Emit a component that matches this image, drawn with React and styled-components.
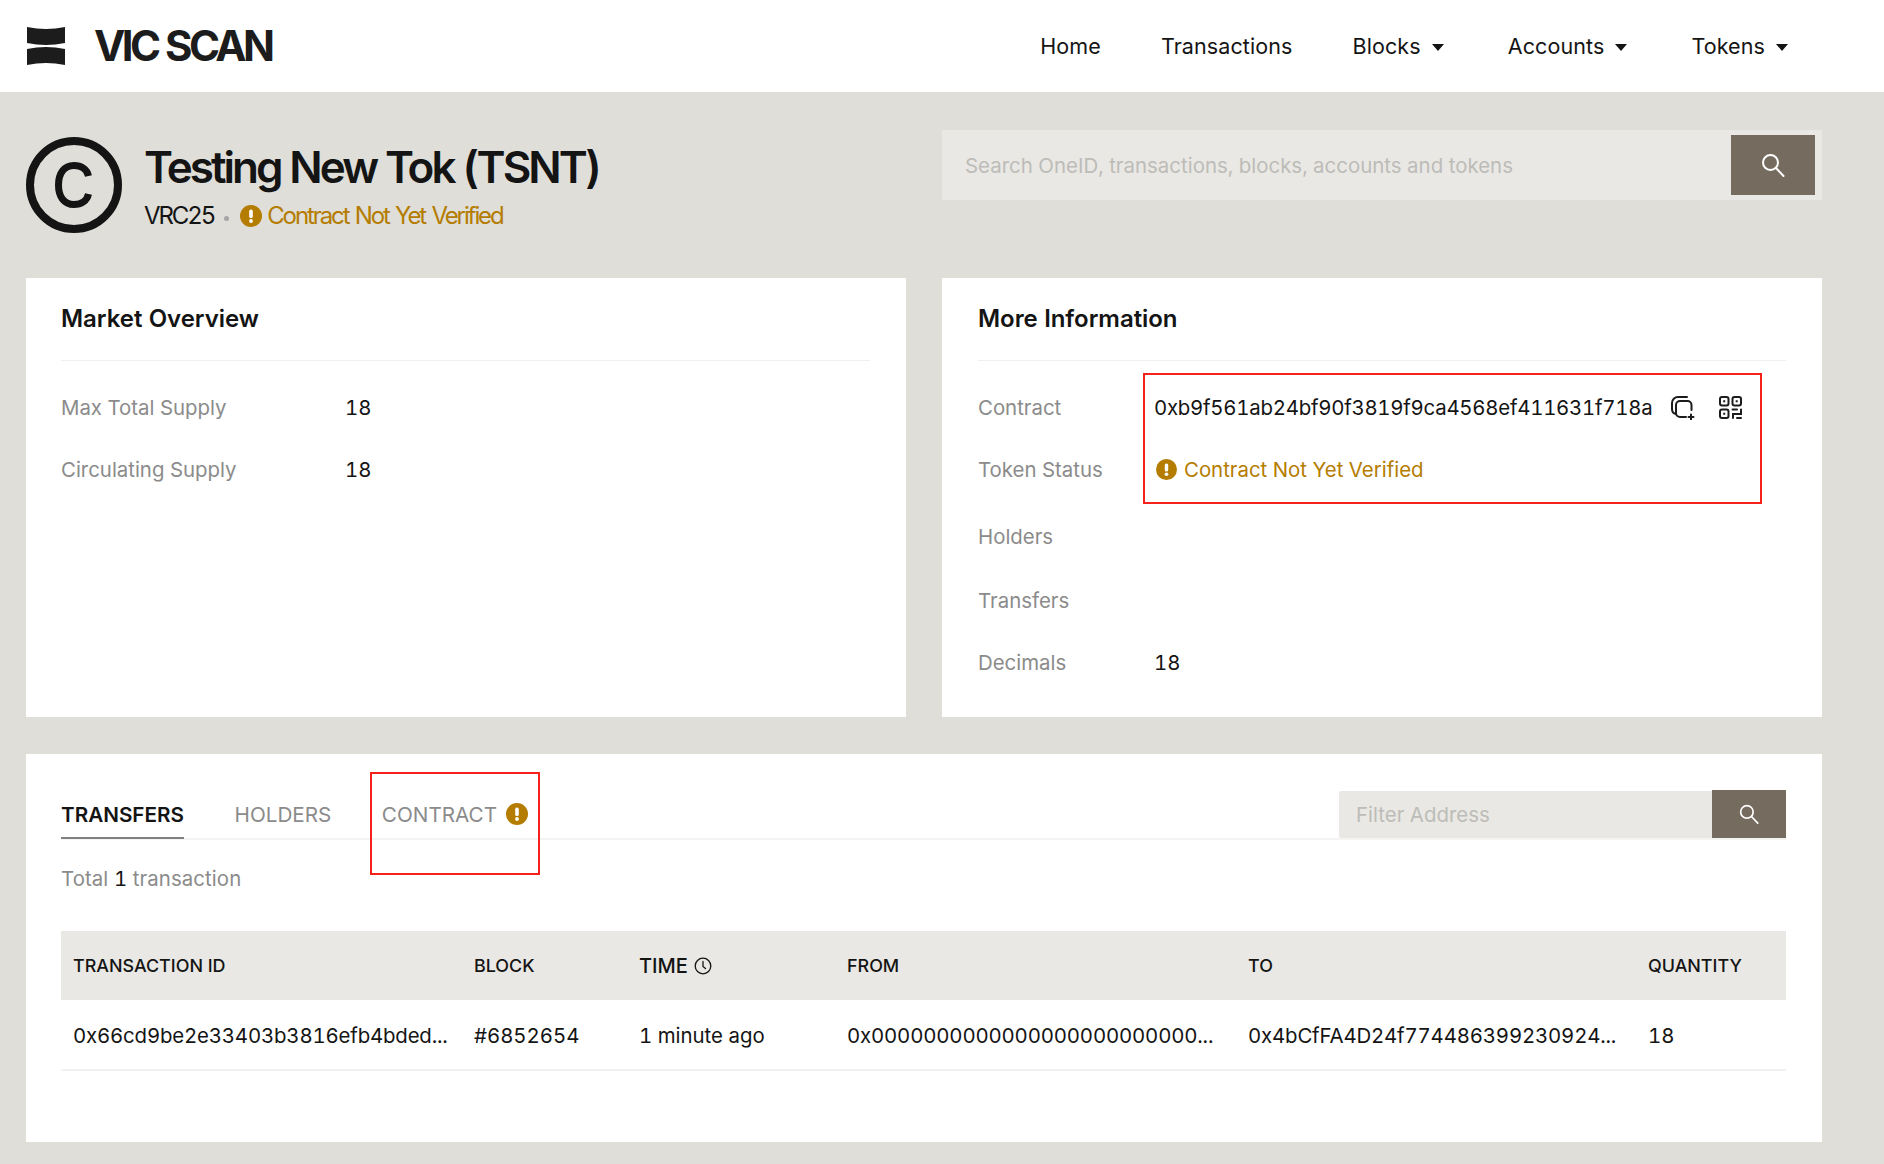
import React from 'react';
import styled, { createGlobalStyle } from 'styled-components';

const Global = createGlobalStyle`
  html, body { margin: 0; padding: 0; }
  body {
    background: #dfded9;
    font-family: Inter, "Liberation Sans", sans-serif;
    font-variant-numeric: tabular-nums;
    color: #141414;
  }
`;

const Page = styled.div`
  height: 1164px;
  overflow: hidden;
  background: #dfded9;
`;

const Header = styled.header`
  height: 92px;
  background: #fff;
  display: flex;
  align-items: center;
  justify-content: space-between;
  padding: 0 92px 0 27px;
  box-sizing: border-box;
`;

const Brand = styled.div`
  display: flex;
  align-items: center;
  gap: 29px;
`;

const BrandName = styled.div`
  font-size: 42px;
  font-weight: 700;
  letter-spacing: -3.6px;
  color: #1c1c1c;
  line-height: 1;
`;

const Nav = styled.nav`
  display: flex;
  align-items: center;
  gap: 60px;
`;

const NavItem = styled.div`
  display: flex;
  align-items: center;
  gap: 11px;
  font-size: 21.5px;
  letter-spacing: 0.1px;
  color: #141414;
  margin-right: ${({ $menu }) => ($menu ? 4 : 0)}px;
`;

const Caret = styled.span`
  width: 0;
  height: 0;
  border-left: 6.5px solid transparent;
  border-right: 6.5px solid transparent;
  border-top: 7px solid #141414;
  margin-top: 3px;
`;

const Main = styled.main`
  padding: 38px 62px 22px 26px;
  display: flex;
  flex-direction: column;
`;

const TopRow = styled.div`
  display: grid;
  grid-template-columns: 880px 880px;
  column-gap: 36px;
  height: 148px;
`;

const TokenHead = styled.div`
  display: flex;
  gap: 22px;
  padding-top: 7px;
  align-items: flex-start;
`;

const TokenText = styled.div`
  display: flex;
  flex-direction: column;
  padding-top: 5px;
`;

const TokenName = styled.h1`
  margin: 0;
  font-size: 44px;
  font-weight: 600;
  letter-spacing: -2.97px;
  line-height: 50px;
  color: #141414;
`;

const TokenMeta = styled.div`
  display: flex;
  align-items: center;
  font-size: 24px;
  letter-spacing: -2.1px;
  word-spacing: 2px;
  line-height: 30px;
  margin-top: 9px;
`;

const MetaDot = styled.span`
  width: 5px;
  height: 5px;
  border-radius: 50%;
  background: #a5a5a5;
  margin: 4px 11px 0 10px;
`;

const WarnText = styled.span`
  color: #b47c00;
  margin-left: ${({ $gap }) => $gap}px;
`;

const SearchBar = styled.div`
  height: 70px;
  background: #e9e8e4;
  display: flex;
  align-items: center;
  justify-content: space-between;
  padding: 0 7px 0 23px;
`;

const Placeholder = styled.span`
  font-size: 20.45px;
  color: #bdbcb8;
  padding-top: 1px;
`;

const SearchButton = styled.div`
  width: ${({ $w }) => $w}px;
  height: ${({ $h }) => $h}px;
  background: #766b5f;
  display: flex;
  align-items: center;
  justify-content: center;
  flex-shrink: 0;
`;

const Cards = styled.div`
  display: grid;
  grid-template-columns: 880px 880px;
  column-gap: 36px;
`;

const Card = styled.section`
  position: relative;
  background: #fff;
  height: 439px;
  padding: 0 36px 0 ${({ $left }) => $left}px;
  box-sizing: border-box;
`;

const CardTitle = styled.h2`
  margin: 0;
  height: 83px;
  display: flex;
  align-items: center;
  font-size: 24px;
  font-weight: 600;
  letter-spacing: -0.05px;
  color: #141414;
  border-bottom: 1px solid #efefed;
  padding-bottom: 2px;
  box-sizing: border-box;
`;

const InfoList = styled.div`
  padding-top: 15px;
  display: flex;
  flex-direction: column;
`;

const InfoRow = styled.div`
  height: ${({ $h }) => $h || 62}px;
  display: grid;
  grid-template-columns: ${({ $label }) => $label}px 1fr;
  align-items: center;
  font-size: 20.4px;
`;

const InfoLabel = styled.span`
  color: #8b8b8b;
`;

const InfoValue = styled.span`
  display: flex;
  align-items: center;
  color: #141414;
`;

const Address = styled.span`
  letter-spacing: -0.25px;
`;

const AddressIcons = styled.span`
  display: flex;
  align-items: center;
  gap: 24px;
  margin-left: 18px;
`;

const StatusValue = styled(InfoValue)`
  padding-left: 2px;
`;

const ContractHighlight = styled.div`
  position: absolute;
  left: 201px;
  top: 95px;
  width: 619px;
  height: 131px;
  box-sizing: border-box;
  border: 2px solid #f4221a;
  pointer-events: none;
`;

const TabsCard = styled.section`
  position: relative;
  margin-top: 37px;
  background: #fff;
  height: 388px;
  padding: 35px 36px 0 35px;
  box-sizing: border-box;
`;

const TabBar = styled.div`
  display: flex;
  align-items: flex-end;
  justify-content: space-between;
  height: 49px;
  border-bottom: 2px solid #f4f4f3;
`;

const Tabs = styled.div`
  display: flex;
  gap: 50.5px;
  height: 100%;
`;

const Tab = styled.div`
  display: flex;
  align-items: center;
  gap: 9px;
  height: 50px;
  padding-top: 2px;
  box-sizing: border-box;
  font-size: 20.7px;
  font-weight: ${({ $active }) => ($active ? 600 : 400)};
  color: ${({ $active }) => ($active ? '#141414' : '#8b8b8b')};
  border-bottom: 2px solid ${({ $active }) => ($active ? '#808080' : 'transparent')};
`;

const TabHighlight = styled.div`
  position: absolute;
  left: 344px;
  top: 18px;
  width: 170px;
  height: 103px;
  box-sizing: border-box;
  border: 2px solid #f4221a;
  pointer-events: none;
`;

const FilterBox = styled.div`
  display: flex;
`;

const FilterInput = styled.div`
  width: 373px;
  height: 47px;
  background: #e9e8e4;
  display: flex;
  align-items: center;
  padding: 0 0 2px 17px;
  box-sizing: border-box;
  border-radius: 2px 0 0 2px;
  margin-top: 1px;
`;

const TotalLine = styled.div`
  font-size: 20.4px;
  color: #8b8b8b;
  margin-top: 27px;
  line-height: 24px;
  letter-spacing: 0.08px;
`;

const TotalCount = styled.span`
  color: #141414;
`;

const Table = styled.div`
  margin-top: 40px;
`;

const Row = styled.div`
  display: grid;
  grid-template-columns: 401px 165px 208px 401px 400px 150px;
  align-items: center;
  height: ${({ $head }) => ($head ? 69 : 71)}px;
  background: ${({ $head }) => ($head ? '#e9e8e4' : 'transparent')};
  border-bottom: ${({ $head }) => ($head ? 'none' : '2px solid #f1f1ef')};
  box-sizing: border-box;
`;

const HeadCell = styled.div`
  padding-left: 12px;
  display: flex;
  align-items: center;
  gap: 6px;
  font-size: ${({ $big }) => ($big ? 20 : 17.9)}px;
  font-weight: 450;
  color: #141414;
`;

const Cell = styled.div`
  padding: 2px 0 0 12px;
  font-size: 20.4px;
  color: #141414;
  white-space: nowrap;
  letter-spacing: ${({ $hash }) => ($hash ? -0.17 : 0)}px;
`;

const WarnIcon = ({ size }) => (
  <svg width={size} height={size} viewBox="0 0 22 22" style={{ flexShrink: 0 }}>
    <circle cx="11" cy="11" r="11" fill="#b47c00" />
    <rect x="9.2" y="4.6" width="3.6" height="8.4" rx="1.6" fill="#fff" />
    <circle cx="11" cy="16" r="1.9" fill="#fff" />
  </svg>
);

const SearchIcon = ({ size }) => (
  <svg width={size} height={size} viewBox="0 0 24 24" fill="none" stroke="#fff" strokeWidth="2">
    <circle cx="9.5" cy="9.5" r="7.5" />
    <path d="M15 15l7.5 8" strokeLinecap="round" />
  </svg>
);

const Logo = () => (
  <svg width="38" height="38" viewBox="0 0 38 38">
    <path d="M0 0Q19 4 38 0V16Q19 20 0 16Z" fill="#1c1c1c" />
    <path d="M0 22Q19 18 38 22V38Q19 34 0 38Z" fill="#1c1c1c" />
  </svg>
);

const TokenLogo = () => (
  <svg width="96" height="96" viewBox="0 0 96 96" fill="none" stroke="#141414">
    <circle cx="48" cy="48" r="44" strokeWidth="8" />
    <path d="M62.500 39C61 32 55 28.500 48 28.500C38 28.500 32.500 36.500 32.500 48C32.500 59.500 38 67.500 48 67.500C55 67.500 61 64 62.500 57" strokeWidth="7" />
  </svg>
);

const CopyIcon = () => (
  <svg width="25" height="25" viewBox="0 0 25 25" fill="none" stroke="#1c1c1c" strokeWidth="2" strokeLinecap="round">
    <path d="M17 2H8A6 6 0 0 0 2 8V14A5 5 0 0 0 6 19" />
    <path d="M21.500 15V10A4 4 0 0 0 17.500 6H10A4 4 0 0 0 6 10V18A4 4 0 0 0 10 22H16" />
    <path d="M21 19.500V24.500M18.500 22H23.500" />
  </svg>
);

const QrIcon = () => (
  <svg width="23" height="23" viewBox="0 0 23 23" fill="none" stroke="#1c1c1c" strokeWidth="2">
    <rect x="1" y="1" width="8.500" height="8.500" rx="2" />
    <rect x="13.500" y="1" width="8.500" height="8.500" rx="2" />
    <rect x="1" y="13.500" width="8.500" height="8.500" rx="2" />
    <path d="M4.200 5.200h2M16.700 5.200h2M4.200 17.700h2" />
    <path d="M13.500 13.500H18M22 13.500V18H14V22M18 22H22" strokeLinecap="round" />
  </svg>
);

const ClockIcon = () => (
  <svg width="18" height="18" viewBox="0 0 18 18" fill="none" stroke="#141414" strokeWidth="1.3">
    <circle cx="9" cy="9" r="7.8" />
    <path d="M9 4.500V9.500L11.500 11.500" strokeLinecap="round" />
  </svg>
);

const App = () => (
  <Page>
    <Global />
    <Header>
      <Brand>
        <Logo />
        <BrandName>VIC SCAN</BrandName>
      </Brand>
      <Nav>
        <NavItem>Home</NavItem>
        <NavItem>Transactions</NavItem>
        <NavItem $menu>Blocks<Caret /></NavItem>
        <NavItem $menu>Accounts<Caret /></NavItem>
        <NavItem $menu>Tokens<Caret /></NavItem>
      </Nav>
    </Header>
    <Main>
      <TopRow>
        <TokenHead>
          <TokenLogo />
          <TokenText>
            <TokenName>Testing New Tok (TSNT)</TokenName>
            <TokenMeta>
              VRC25
              <MetaDot />
              <WarnIcon size={22} />
              <WarnText $gap={5}>Contract Not Yet Verified</WarnText>
            </TokenMeta>
          </TokenText>
        </TokenHead>
        <SearchBar>
          <Placeholder>Search OneID, transactions, blocks, accounts and tokens</Placeholder>
          <SearchButton $w={84} $h={60}><SearchIcon size={24} /></SearchButton>
        </SearchBar>
      </TopRow>
      <Cards>
        <Card $left={35}>
          <CardTitle>Market Overview</CardTitle>
          <InfoList>
            <InfoRow $label={284}><InfoLabel>Max Total Supply</InfoLabel><InfoValue>18</InfoValue></InfoRow>
            <InfoRow $label={284}><InfoLabel>Circulating Supply</InfoLabel><InfoValue>18</InfoValue></InfoRow>
          </InfoList>
        </Card>
        <Card $left={36}>
          <CardTitle>More Information</CardTitle>
          <InfoList>
            <InfoRow $label={176}>
              <InfoLabel>Contract</InfoLabel>
              <InfoValue>
                <Address>0xb9f561ab24bf90f3819f9ca4568ef411631f718a</Address>
                <AddressIcons><CopyIcon /><QrIcon /></AddressIcons>
              </InfoValue>
            </InfoRow>
            <InfoRow $label={176}>
              <InfoLabel>Token Status</InfoLabel>
              <StatusValue>
                <WarnIcon size={21} />
                <WarnText $gap={7}>Contract Not Yet Verified</WarnText>
              </StatusValue>
            </InfoRow>
            <InfoRow $label={176} $h={73}><InfoLabel>Holders</InfoLabel></InfoRow>
            <InfoRow $label={176} $h={54}><InfoLabel>Transfers</InfoLabel></InfoRow>
            <InfoRow $label={176} $h={70}><InfoLabel>Decimals</InfoLabel><InfoValue>18</InfoValue></InfoRow>
          </InfoList>
          <ContractHighlight />
        </Card>
      </Cards>
      <TabsCard>
        <TabBar>
          <Tabs>
            <Tab $active>TRANSFERS</Tab>
            <Tab>HOLDERS</Tab>
            <Tab>CONTRACT<WarnIcon size={22} /></Tab>
          </Tabs>
          <FilterBox>
            <FilterInput><Placeholder>Filter Address</Placeholder></FilterInput>
            <SearchButton $w={74} $h={48}><SearchIcon size={20} /></SearchButton>
          </FilterBox>
        </TabBar>
        <TabHighlight />
        <TotalLine>Total <TotalCount>1</TotalCount> transaction</TotalLine>
        <Table>
          <Row $head>
            <HeadCell>TRANSACTION ID</HeadCell>
            <HeadCell>BLOCK</HeadCell>
            <HeadCell $big>TIME<ClockIcon /></HeadCell>
            <HeadCell>FROM</HeadCell>
            <HeadCell>TO</HeadCell>
            <HeadCell>QUANTITY</HeadCell>
          </Row>
          <Row>
            <Cell $hash>0x66cd9be2e33403b3816efb4bded...</Cell>
            <Cell>#6852654</Cell>
            <Cell>1 minute ago</Cell>
            <Cell $hash>0x0000000000000000000000000...</Cell>
            <Cell $hash>0x4bCfFA4D24f774486399230924...</Cell>
            <Cell>18</Cell>
          </Row>
        </Table>
      </TabsCard>
    </Main>
  </Page>
);

export default App;
